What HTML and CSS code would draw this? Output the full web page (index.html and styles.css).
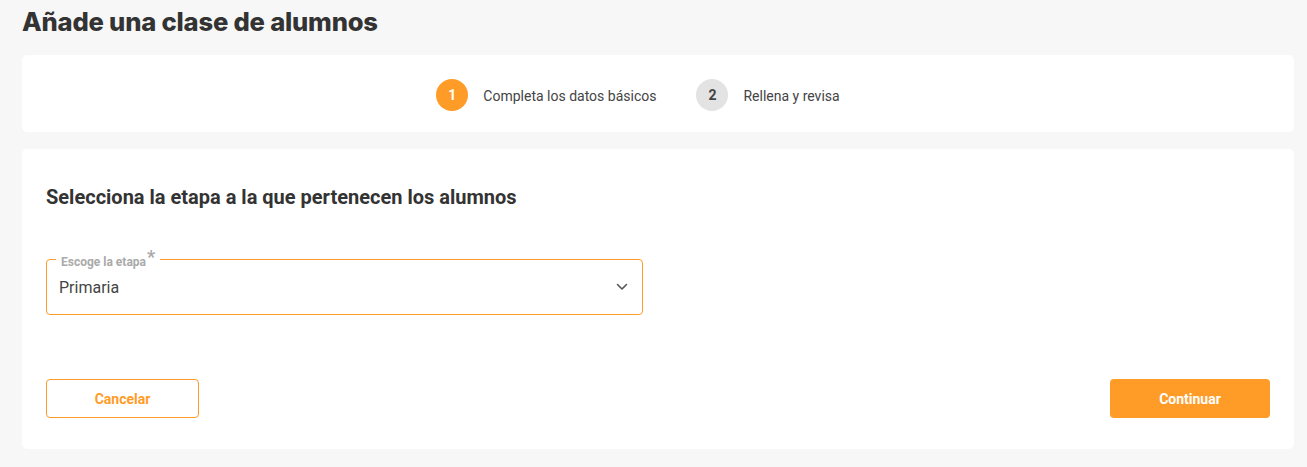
FILE: index.html
```html
<!DOCTYPE html>
<html lang="es">
<head>
<meta charset="utf-8">
<title>Añade una clase de alumnos</title>
<link rel="stylesheet" href="styles.css">
</head>
<body>
<h1 class="page-title">Añade una clase de alumnos</h1>
<section class="card steps-card">
  <div class="steps">
    <div class="step step-active"><span class="step-num">1</span><span class="step-label">Completa los datos básicos</span></div>
    <div class="step"><span class="step-num">2</span><span class="step-label">Rellena y revisa</span></div>
  </div>
</section>
<section class="card form-card">
  <h2 class="form-title">Selecciona la etapa a la que pertenecen los alumnos</h2>
  <div class="field">
    <span class="field-label">Escoge la etapa<span class="req">*</span></span>
    <span class="field-value">Primaria</span>
    <svg class="chevron" width="12" height="8" viewBox="0 0 12 8"><path d="M1.5 1.5 L6 6 L10.5 1.5" fill="none" stroke="#555" stroke-width="1.6" stroke-linecap="round" stroke-linejoin="round"/></svg>
  </div>
  <div class="actions">
    <button class="btn btn-outline">Cancelar</button>
    <button class="btn btn-primary">Continuar</button>
  </div>
</section>
</body>
</html>
```
FILE: styles.css
```css
html, body {
  margin: 0;
  padding: 0;
  background: #f7f7f7;
}
body {
  padding: 0 13px 0 22px;
  font-family: Roboto, "Liberation Sans", sans-serif;
  color: #333;
}
.page-title {
  font-family: Inter, "Liberation Sans", sans-serif;
  font-weight: 800;
  font-size: 25.6px;
  line-height: 32px;
  letter-spacing: -0.2px;
  color: #333;
  margin: 6px 0 17px;
}
.card {
  background: #fff;
  border-radius: 5px;
}
.steps-card {
  padding: 24px 0 21px;
  margin-bottom: 17px;
}
.steps {
  display: flex;
  justify-content: center;
}
.step {
  display: flex;
  align-items: center;
  margin-right: 40px;
}
.step-num {
  width: 32px;
  height: 32px;
  border-radius: 50%;
  background: #e3e3e3;
  color: #444;
  font-weight: 700;
  font-size: 14px;
  display: flex;
  align-items: center;
  justify-content: center;
  margin-right: 15px;
}
.step-active .step-num {
  background: #ff9c27;
  color: #fff;
}
.step-label {
  font-size: 14px;
  color: #444;
  padding-top: 1px;
}
.form-card {
  padding: 36px 24px 31px;
}
.form-title {
  margin: 0 0 50px;
  font-size: 20px;
  line-height: 24px;
  font-weight: 700;
  color: #333;
}
.field {
  position: relative;
  width: 597px;
  height: 56px;
  box-sizing: border-box;
  border: 1px solid #ff9c27;
  border-radius: 4px;
  display: flex;
  align-items: center;
  padding: 0 12px;
}
.field-label {
  position: absolute;
  top: -6px;
  left: 9px;
  padding: 0 5px;
  background: #fff;
  font-size: 12px;
  line-height: 16px;
  font-weight: 700;
  color: #aaa;
  display: flex;
  align-items: flex-start;
}
.req {
  font-size: 18px;
  line-height: 12px;
  margin-left: 1px;
  margin-top: -3px;
}
.field-value {
  flex: 1;
  font-size: 16px;
  color: #444;
}
.chevron {
  margin-right: 2px;
}
.actions {
  display: flex;
  justify-content: space-between;
  margin-top: 64px;
}
.btn {
  height: 39px;
  border-radius: 4px;
  font-family: Roboto, "Liberation Sans", sans-serif;
  font-size: 14px;
  font-weight: 700;
  cursor: pointer;
}
.btn-outline {
  width: 153px;
  background: #fff;
  border: 1px solid #ff9c27;
  color: #ff9c27;
}
.btn-primary {
  width: 160px;
  background: #ff9c27;
  border: none;
  color: #fff;
}
```
